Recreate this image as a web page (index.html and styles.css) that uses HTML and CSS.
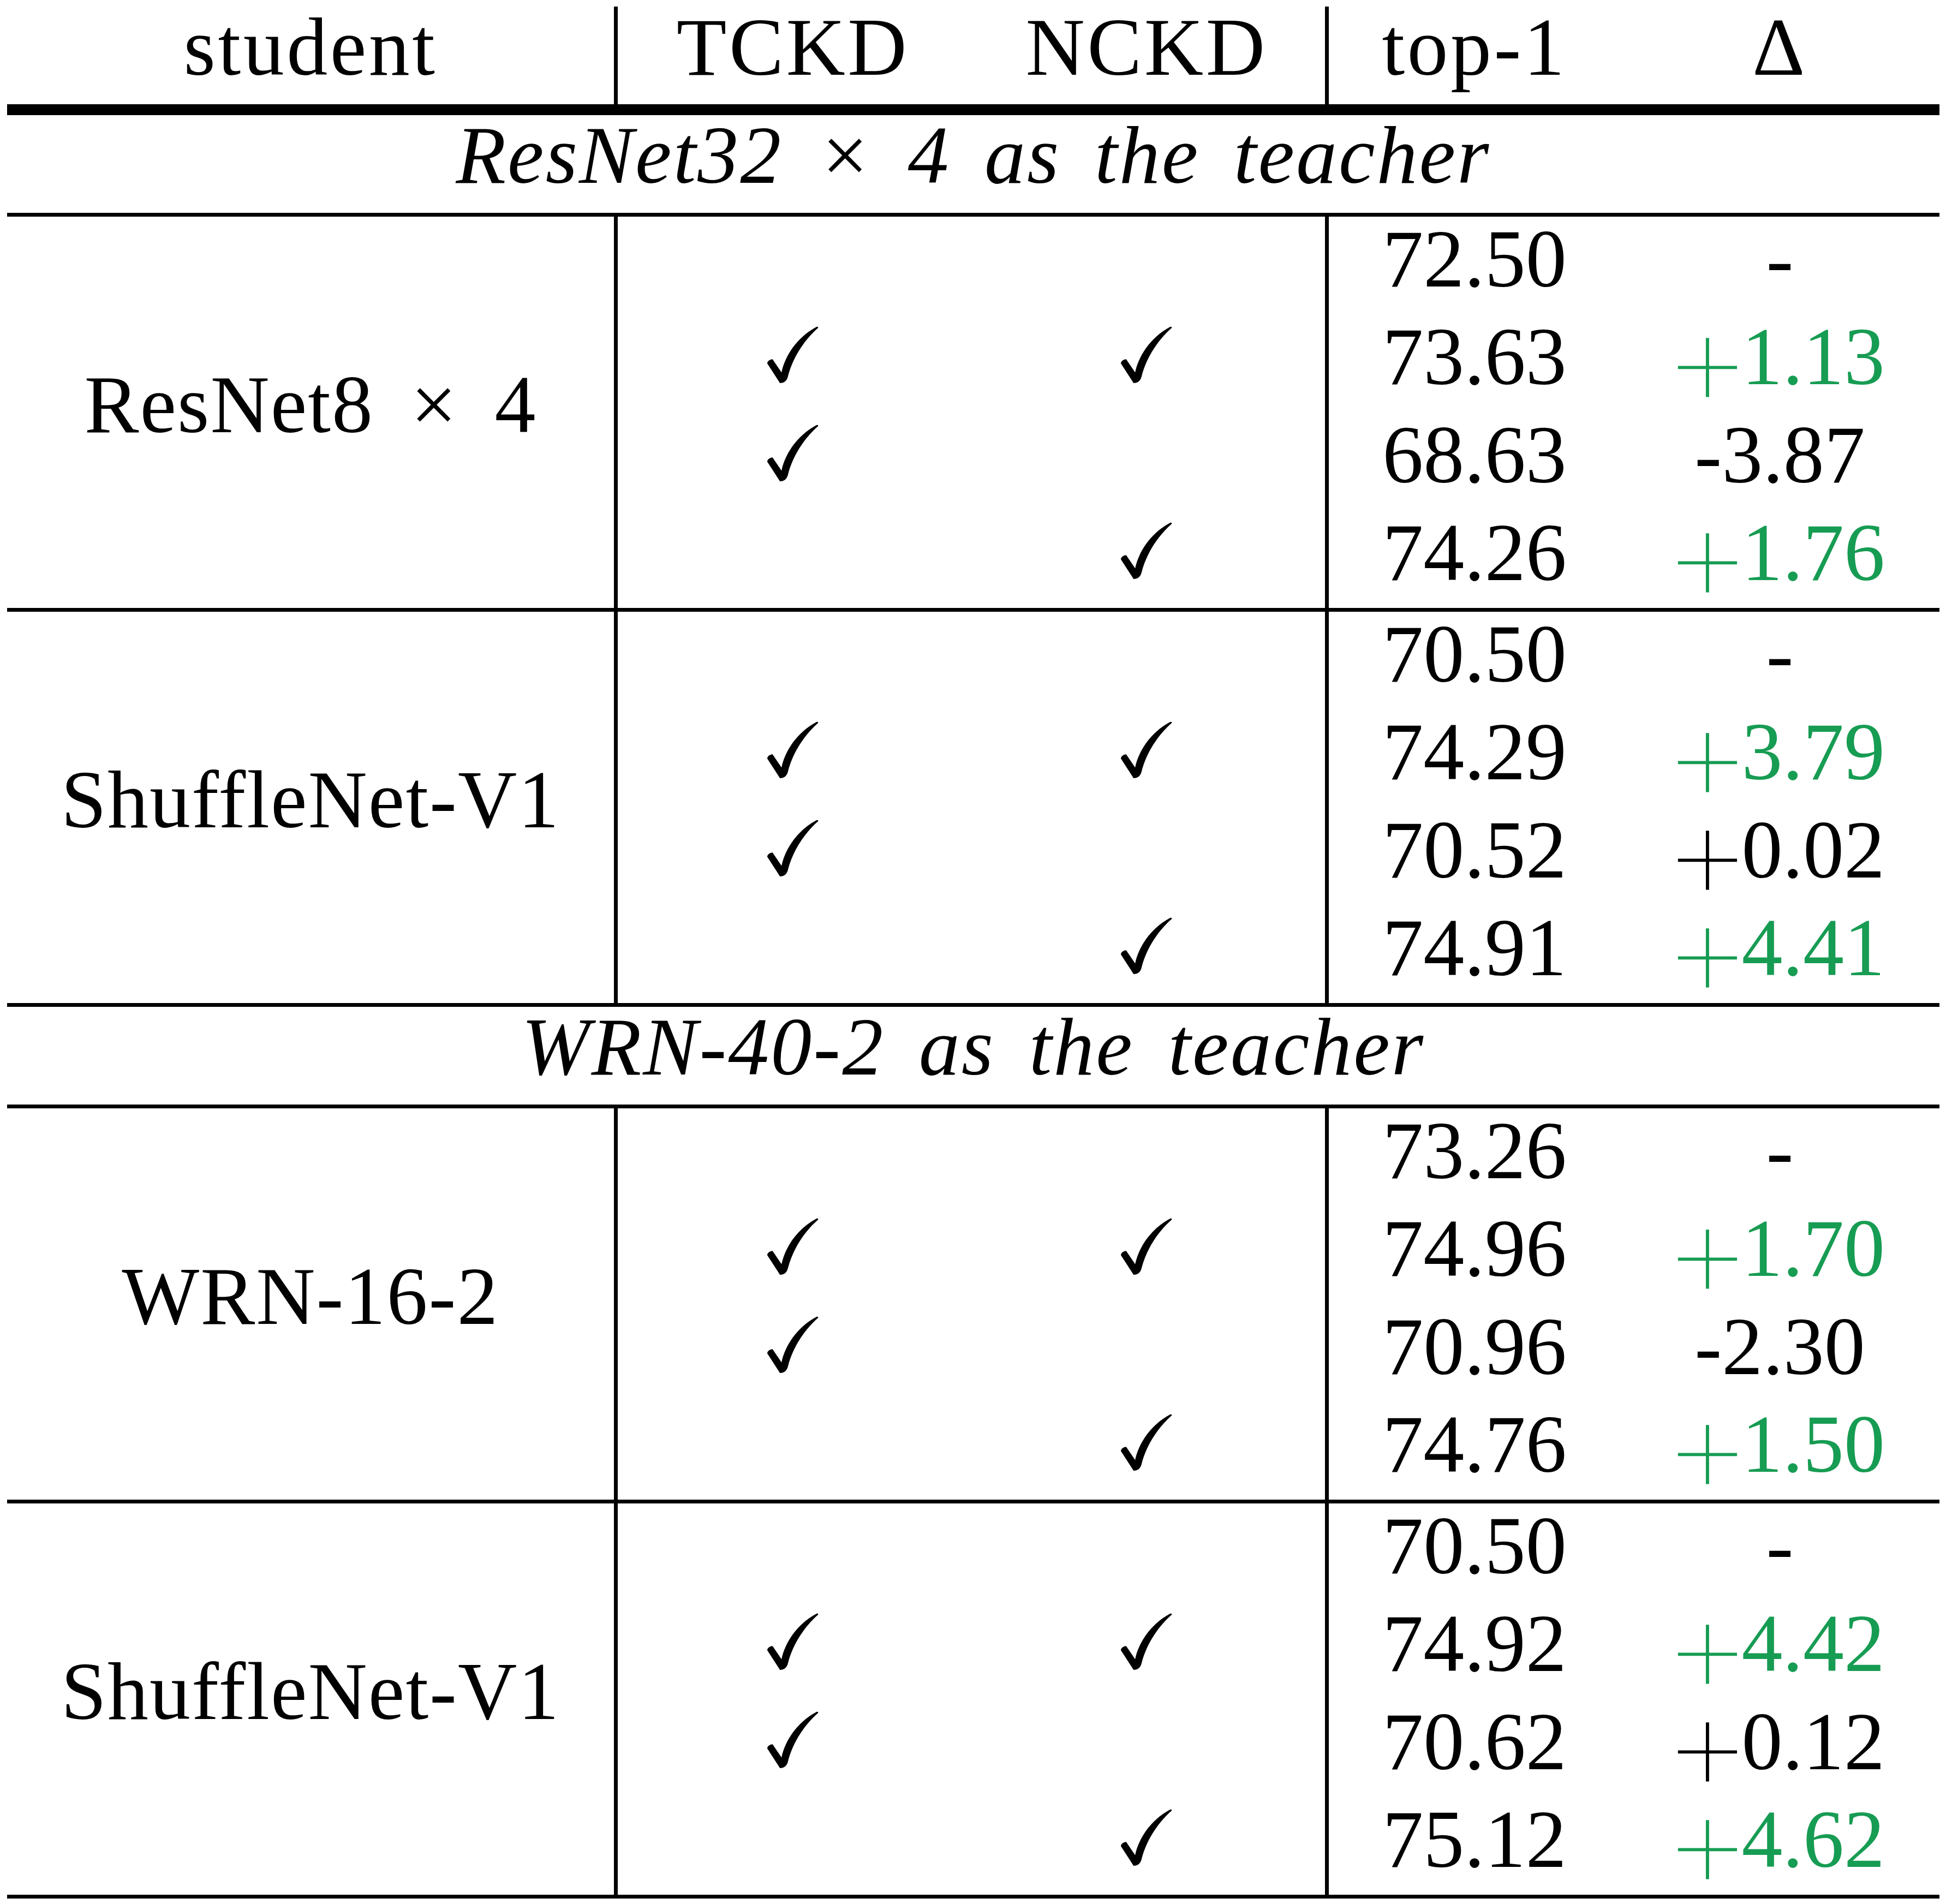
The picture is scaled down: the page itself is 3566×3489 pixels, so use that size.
FILE: index.html
```html
<!DOCTYPE html>
<html lang="en">
<head>
<meta charset="utf-8">
<title>TCKD / NCKD ablation</title>
<link rel="stylesheet" href="styles.css">
</head>
<body>
<div class="table">
  <div class="head">
    <div class="c">student</div>
    <div class="vl"></div>
    <div class="c">TCKD</div>
    <div class="c">NCKD</div>
    <div class="vl"></div>
    <div class="c">top-1</div>
    <div class="c">Δ</div>
  </div>
  <div class="rule thick"></div>
  <div class="teacher">ResNet32 × 4 as the teacher</div>
  <div class="rule"></div>

  <div class="sect">
    <div class="sname">ResNet8<span class="op">×</span>4</div>
    <div class="vl a"></div>
    <div class="vl b"></div>
    <div class="c"></div><div class="c"></div><div class="num">72.50</div><div class="num">-</div>
    <div class="ck"><svg viewBox="0 0 100 110" width="97" height="107" aria-hidden="true"><path d="M 1 70 C 1 66, 6 62, 11 62 L 28 87 C 34 58, 55 22, 94 1 C 96 0, 98 1, 97 3 C 75 22, 50 55, 40 95 C 38 103, 33 107, 25 107 Z"/></svg></div><div class="ck"><svg viewBox="0 0 100 110" width="97" height="107" aria-hidden="true"><path d="M 1 70 C 1 66, 6 62, 11 62 L 28 87 C 34 58, 55 22, 94 1 C 96 0, 98 1, 97 3 C 75 22, 50 55, 40 95 C 38 103, 33 107, 25 107 Z"/></svg></div><div class="num">73.63</div><div class="num g"><span class="pl">+</span>1.13</div>
    <div class="ck"><svg viewBox="0 0 100 110" width="97" height="107" aria-hidden="true"><path d="M 1 70 C 1 66, 6 62, 11 62 L 28 87 C 34 58, 55 22, 94 1 C 96 0, 98 1, 97 3 C 75 22, 50 55, 40 95 C 38 103, 33 107, 25 107 Z"/></svg></div><div class="c"></div><div class="num">68.63</div><div class="num">-3.87</div>
    <div class="c"></div><div class="ck"><svg viewBox="0 0 100 110" width="97" height="107" aria-hidden="true"><path d="M 1 70 C 1 66, 6 62, 11 62 L 28 87 C 34 58, 55 22, 94 1 C 96 0, 98 1, 97 3 C 75 22, 50 55, 40 95 C 38 103, 33 107, 25 107 Z"/></svg></div><div class="num">74.26</div><div class="num g"><span class="pl">+</span>1.76</div>
  </div>
  <div class="rule"></div>

  <div class="sect">
    <div class="sname">ShuffleNet-V1</div>
    <div class="vl a"></div>
    <div class="vl b"></div>
    <div class="c"></div><div class="c"></div><div class="num">70.50</div><div class="num">-</div>
    <div class="ck"><svg viewBox="0 0 100 110" width="97" height="107" aria-hidden="true"><path d="M 1 70 C 1 66, 6 62, 11 62 L 28 87 C 34 58, 55 22, 94 1 C 96 0, 98 1, 97 3 C 75 22, 50 55, 40 95 C 38 103, 33 107, 25 107 Z"/></svg></div><div class="ck"><svg viewBox="0 0 100 110" width="97" height="107" aria-hidden="true"><path d="M 1 70 C 1 66, 6 62, 11 62 L 28 87 C 34 58, 55 22, 94 1 C 96 0, 98 1, 97 3 C 75 22, 50 55, 40 95 C 38 103, 33 107, 25 107 Z"/></svg></div><div class="num">74.29</div><div class="num g"><span class="pl">+</span>3.79</div>
    <div class="ck"><svg viewBox="0 0 100 110" width="97" height="107" aria-hidden="true"><path d="M 1 70 C 1 66, 6 62, 11 62 L 28 87 C 34 58, 55 22, 94 1 C 96 0, 98 1, 97 3 C 75 22, 50 55, 40 95 C 38 103, 33 107, 25 107 Z"/></svg></div><div class="c"></div><div class="num">70.52</div><div class="num"><span class="pl">+</span>0.02</div>
    <div class="c"></div><div class="ck"><svg viewBox="0 0 100 110" width="97" height="107" aria-hidden="true"><path d="M 1 70 C 1 66, 6 62, 11 62 L 28 87 C 34 58, 55 22, 94 1 C 96 0, 98 1, 97 3 C 75 22, 50 55, 40 95 C 38 103, 33 107, 25 107 Z"/></svg></div><div class="num">74.91</div><div class="num g"><span class="pl">+</span>4.41</div>
  </div>
  <div class="rule"></div>

  <div class="teacher">WRN-40-2 as the teacher</div>
  <div class="rule"></div>

  <div class="sect">
    <div class="sname">WRN-16-2</div>
    <div class="vl a"></div>
    <div class="vl b"></div>
    <div class="c"></div><div class="c"></div><div class="num">73.26</div><div class="num">-</div>
    <div class="ck"><svg viewBox="0 0 100 110" width="97" height="107" aria-hidden="true"><path d="M 1 70 C 1 66, 6 62, 11 62 L 28 87 C 34 58, 55 22, 94 1 C 96 0, 98 1, 97 3 C 75 22, 50 55, 40 95 C 38 103, 33 107, 25 107 Z"/></svg></div><div class="ck"><svg viewBox="0 0 100 110" width="97" height="107" aria-hidden="true"><path d="M 1 70 C 1 66, 6 62, 11 62 L 28 87 C 34 58, 55 22, 94 1 C 96 0, 98 1, 97 3 C 75 22, 50 55, 40 95 C 38 103, 33 107, 25 107 Z"/></svg></div><div class="num">74.96</div><div class="num g"><span class="pl">+</span>1.70</div>
    <div class="ck"><svg viewBox="0 0 100 110" width="97" height="107" aria-hidden="true"><path d="M 1 70 C 1 66, 6 62, 11 62 L 28 87 C 34 58, 55 22, 94 1 C 96 0, 98 1, 97 3 C 75 22, 50 55, 40 95 C 38 103, 33 107, 25 107 Z"/></svg></div><div class="c"></div><div class="num">70.96</div><div class="num">-2.30</div>
    <div class="c"></div><div class="ck"><svg viewBox="0 0 100 110" width="97" height="107" aria-hidden="true"><path d="M 1 70 C 1 66, 6 62, 11 62 L 28 87 C 34 58, 55 22, 94 1 C 96 0, 98 1, 97 3 C 75 22, 50 55, 40 95 C 38 103, 33 107, 25 107 Z"/></svg></div><div class="num">74.76</div><div class="num g"><span class="pl">+</span>1.50</div>
  </div>
  <div class="rule"></div>

  <div class="sect">
    <div class="sname">ShuffleNet-V1</div>
    <div class="vl a"></div>
    <div class="vl b"></div>
    <div class="c"></div><div class="c"></div><div class="num">70.50</div><div class="num">-</div>
    <div class="ck"><svg viewBox="0 0 100 110" width="97" height="107" aria-hidden="true"><path d="M 1 70 C 1 66, 6 62, 11 62 L 28 87 C 34 58, 55 22, 94 1 C 96 0, 98 1, 97 3 C 75 22, 50 55, 40 95 C 38 103, 33 107, 25 107 Z"/></svg></div><div class="ck"><svg viewBox="0 0 100 110" width="97" height="107" aria-hidden="true"><path d="M 1 70 C 1 66, 6 62, 11 62 L 28 87 C 34 58, 55 22, 94 1 C 96 0, 98 1, 97 3 C 75 22, 50 55, 40 95 C 38 103, 33 107, 25 107 Z"/></svg></div><div class="num">74.92</div><div class="num g"><span class="pl">+</span>4.42</div>
    <div class="ck"><svg viewBox="0 0 100 110" width="97" height="107" aria-hidden="true"><path d="M 1 70 C 1 66, 6 62, 11 62 L 28 87 C 34 58, 55 22, 94 1 C 96 0, 98 1, 97 3 C 75 22, 50 55, 40 95 C 38 103, 33 107, 25 107 Z"/></svg></div><div class="c"></div><div class="num">70.62</div><div class="num"><span class="pl">+</span>0.12</div>
    <div class="c"></div><div class="ck"><svg viewBox="0 0 100 110" width="97" height="107" aria-hidden="true"><path d="M 1 70 C 1 66, 6 62, 11 62 L 28 87 C 34 58, 55 22, 94 1 C 96 0, 98 1, 97 3 C 75 22, 50 55, 40 95 C 38 103, 33 107, 25 107 Z"/></svg></div><div class="num">75.12</div><div class="num g"><span class="pl">+</span>4.62</div>
  </div>
  <div class="rule"></div>
</div>
</body>
</html>
```
FILE: styles.css
```css
html, body {
  margin: 0;
  background: #ffffff;
}
body {
  padding: 12px 0 0 13px;
  font-family: "Liberation Serif", "Times New Roman", serif;
  color: #000000;
}
.table {
  width: 3541px;
}
.head,
.sect {
  display: grid;
  grid-template-columns: 1112px 7px 642px 654px 7px 534px 585px;
}
.head {
  height: 179px;
  font-size: 150px;
  line-height: 148px;
  letter-spacing: 0.03em;
}
.head .c {
  text-align: center;
}
.vl {
  background: #000000;
}
.rule {
  height: 7px;
  background: #000000;
}
.rule.thick {
  height: 20px;
}
.teacher {
  height: 179px;
  text-align: center;
  font-style: italic;
  font-size: 150px;
  line-height: 146px;
  letter-spacing: 3px;
  word-spacing: 22px;
}
.sect {
  height: 717px;
  grid-template-rows: repeat(4, 1fr);
  font-size: 150px;
  line-height: 155px;
}
.sname {
  grid-column: 1;
  grid-row: 1 / 5;
  display: flex;
  align-items: center;
  justify-content: center;
  padding-bottom: 28px;
  letter-spacing: 2px;
}
.op {
  margin: 0 0.45em;
}
.vl.a {
  grid-column: 2;
  grid-row: 1 / 5;
}
.vl.b {
  grid-column: 5;
  grid-row: 1 / 5;
}
.num {
  text-align: center;
  white-space: nowrap;
}
.pl {
  font-family: "Inter", "Liberation Sans", sans-serif;
  font-weight: 100;
  font-size: 1.75em;
  line-height: 0;
  vertical-align: -0.165em;
  margin: 0 -0.08em 0 -0.09em;
}
.g {
  color: #179c53;
}
.ck {
  display: flex;
  justify-content: center;
  align-items: flex-start;
  padding-top: 22px;
}
.ck svg {
  display: block;
  width: 97px;
  height: 107px;
  fill: #000000;
}
```
